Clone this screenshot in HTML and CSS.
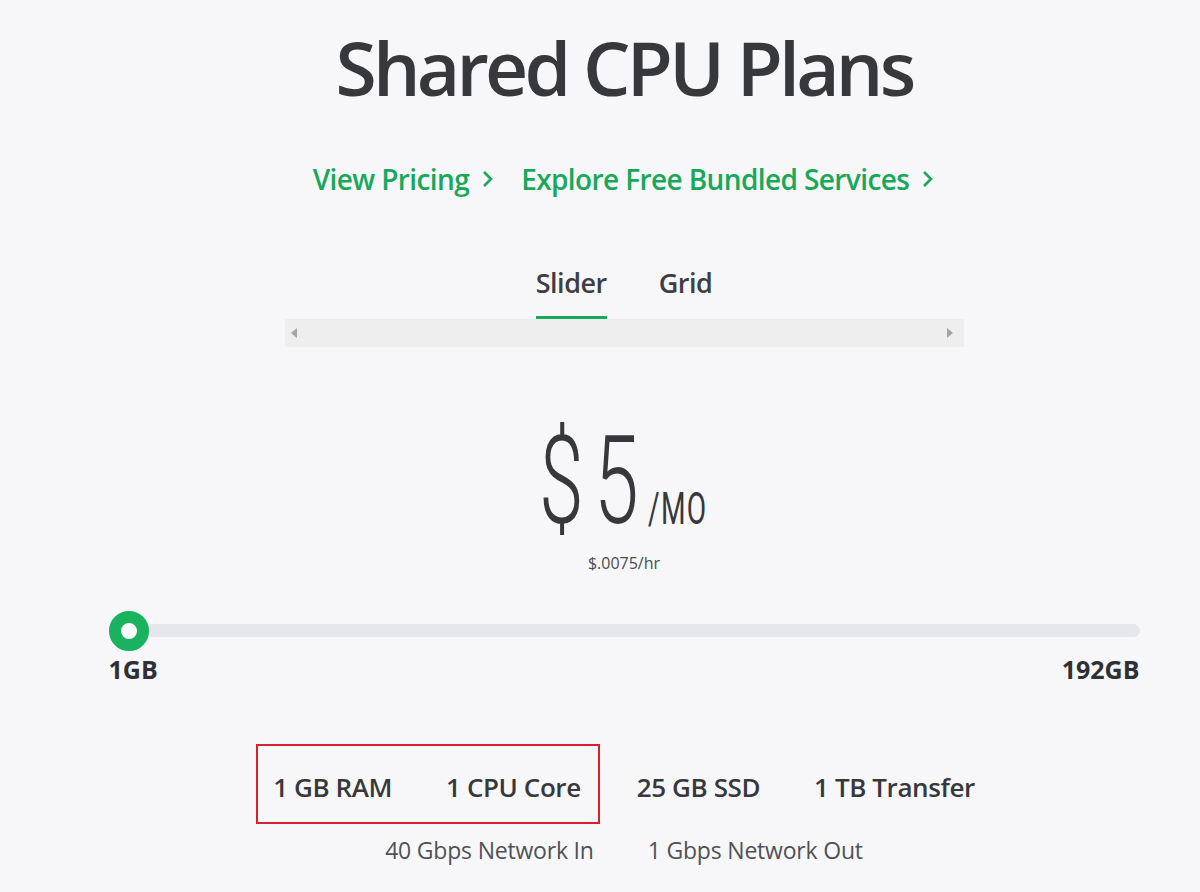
FILE: index.html
```html
<!DOCTYPE html>
<html>
<head>
<meta charset="utf-8">
<link rel="stylesheet" href="styles.css">
</head>
<body>
<main class="page">
  <h1 class="title">Shared CPU Plans</h1>
  <nav class="links">
    <a class="link">View Pricing <span class="chev"><svg width="14" height="20" viewBox="0 0 14 20"><path d="M3 3 L10 10 L3 17" fill="none" stroke="currentColor" stroke-width="2.6"/></svg></span></a>
    <a class="link">Explore Free Bundled Services <span class="chev"><svg width="14" height="20" viewBox="0 0 14 20"><path d="M3 3 L10 10 L3 17" fill="none" stroke="currentColor" stroke-width="2.6"/></svg></span></a>
  </nav>
  <div class="tabs">
    <span class="tab active">Slider</span>
    <span class="tab">Grid</span>
  </div>
  <div class="scrollbar">
    <span class="arrow left"></span>
    <span class="arrow right"></span>
  </div>
  <div class="price">
    <span class="amount"><span class="dollar">$</span><span class="num">5</span></span><span class="per">/MO</span>
  </div>
  <div class="hourly">$.0075/hr</div>
  <div class="slider">
    <div class="track"><span class="knob"></span></div>
    <div class="ends"><span>1GB</span><span>192GB</span></div>
  </div>
  <div class="specs">
    <div class="highlight">
      <span class="spec">1 GB RAM</span>
      <span class="spec">1 CPU Core</span>
    </div>
    <span class="spec">25 GB SSD</span>
    <span class="spec">1 TB Transfer</span>
  </div>
  <div class="network">
    <span>40 Gbps Network In</span>
    <span>1 Gbps Network Out</span>
  </div>
</main>
</body>
</html>
```

FILE: styles.css
```css
html, body {
  margin: 0;
  padding: 0;
  background: #f7f7f9;
}
body {
  font-family: "Open Sans", "Noto Sans", sans-serif;
  color: #37383c;
  height: 892px;
  overflow: hidden;
}
.page {
  margin-left: 48px;
  width: 1152px;
  display: flex;
  flex-direction: column;
  align-items: center;
}
.title {
  margin: 12px 0 0;
  font-size: 75px;
  font-weight: 600;
  letter-spacing: -3.8px;
  line-height: 110px;
  color: #37383c;
}
.links {
  display: flex;
  gap: 26px;
  margin-top: 39px;
}
.link {
  color: #17a85a;
  font-size: 28px;
  font-weight: 600;
  letter-spacing: -0.6px;
  line-height: 36px;
  display: flex;
  align-items: center;
  gap: 12px;
}
.chev {
  display: flex;
  align-items: center;
}
.tabs {
  display: flex;
  gap: 52px;
  margin-top: 69px;
}
.tab {
  font-size: 27px;
  font-weight: 600;
  letter-spacing: -0.5px;
  line-height: 34px;
  padding-bottom: 16px;
  border-bottom: 3px solid transparent;
  color: #3d3e44;
}
.tab.active {
  border-bottom-color: #17a85a;
}
.scrollbar {
  width: 679px;
  height: 28px;
  background: #eeeeef;
  display: flex;
  justify-content: space-between;
  align-items: center;
  padding: 0 11px 0 6px;
  box-sizing: border-box;
}
.arrow {
  width: 0;
  height: 0;
  border-top: 5px solid transparent;
  border-bottom: 5px solid transparent;
}
.arrow.left { border-right: 6px solid #a3a3a5; }
.arrow.right { border-left: 6px solid #a3a3a5; }
.price {
  display: flex;
  align-items: flex-end;
  margin-top: 80px;
  height: 110px;
}
.amount {
  font-family: "Roboto", sans-serif;
  font-weight: 300;
  font-size: 122px;
  line-height: 110px;
  display: flex;
  color: #37383c;
}
.dollar, .num {
  display: inline-block;
  transform: scaleX(0.66);
  transform-origin: left center;
}
.dollar { width: 55px; }
.num { width: 52px; }
.per {
  font-family: "Roboto", sans-serif;
  font-weight: 400;
  font-size: 44px;
  line-height: 44px;
  display: inline-block;
  transform: scaleX(0.64);
  transform-origin: left bottom;
  width: 62px;
  margin-left: 2px;
  margin-bottom: 6px;
  letter-spacing: 2px;
}
.hourly {
  font-size: 16px;
  color: #4a4b50;
  margin-top: 14px;
  line-height: 24px;
}
.slider {
  width: 1031px;
  margin-top: 49px;
}
.track {
  position: relative;
  height: 13px;
  background: #e6e7ec;
  border-radius: 7px;
  margin-left: 10px;
}
.knob {
  position: absolute;
  left: -10px;
  top: -13px;
  width: 16px;
  height: 16px;
  border: 12px solid #19b25e;
  border-radius: 50%;
  background: #fff;
}
.ends {
  display: flex;
  justify-content: space-between;
  font-size: 25px;
  font-weight: 700;
  line-height: 30px;
  margin-top: 17px;
  color: #2f3035;
}
.specs {
  display: flex;
  gap: 54px;
  margin-top: 60px;
  align-items: baseline;
}
.highlight {
  display: flex;
  align-items: baseline;
  gap: 54px;
  border: 2px solid #d6202c;
  padding: 24px 17px 18px 15px;
  margin: 0 -17px 0 -17px;
}
.spec {
  font-size: 26px;
  font-weight: 600;
  letter-spacing: -0.4px;
  line-height: 34px;
  color: #37383c;
}
.network {
  display: flex;
  gap: 54px;
  margin-top: 11px;
  font-size: 23px;
  letter-spacing: -0.2px;
  line-height: 30px;
  color: #505156;
}
```
